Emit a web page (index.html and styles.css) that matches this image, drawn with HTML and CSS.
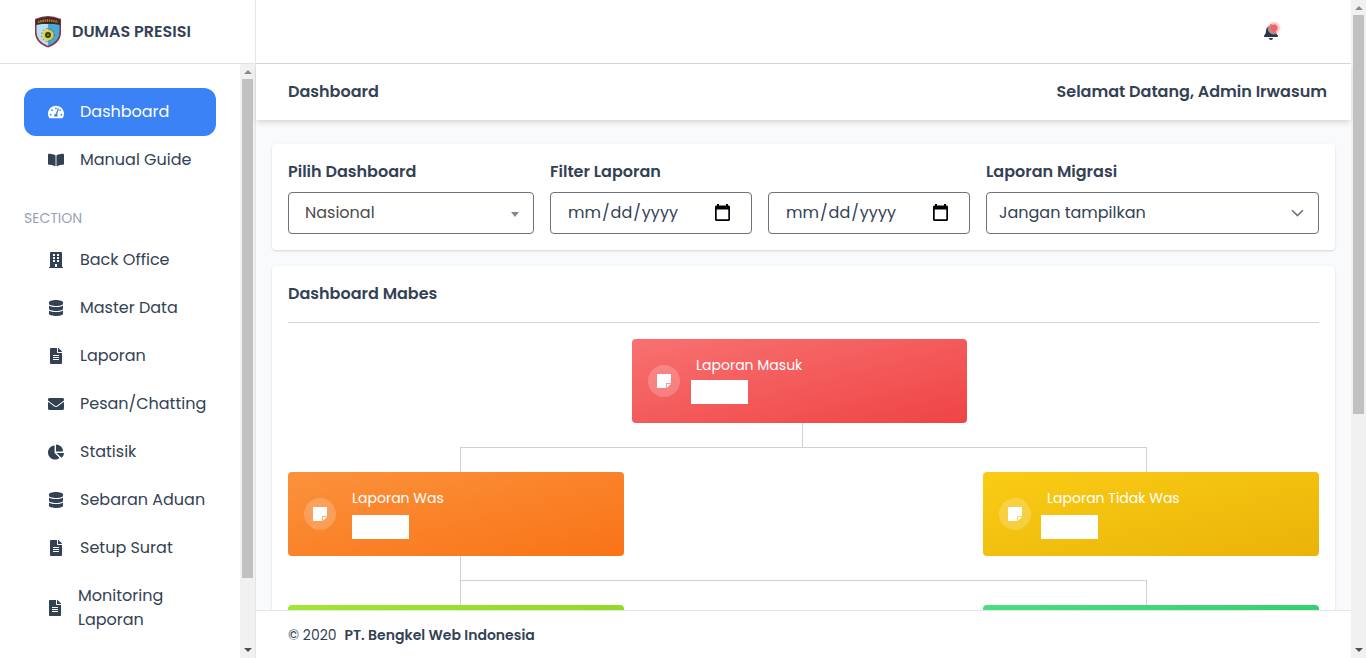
FILE: index.html
```html
<!DOCTYPE html>
<html lang="id">
<head>
<meta charset="utf-8">
<title>Dashboard - Dumas Presisi</title>
<link rel="stylesheet" href="styles.css">
</head>
<body>
<svg class="defs" aria-hidden="true">
  <symbol id="gauge" viewBox="0 0 576 512"><path d="M288 32C128.94 32 0 160.94 0 320c0 52.8 14.25 102.26 39.06 144.8 5.61 9.62 16.3 15.2 27.44 15.2h443c11.14 0 21.83-5.58 27.44-15.2C561.75 422.26 576 372.8 576 320c0-159.06-128.94-288-288-288zm0 64c14.71 0 26.58 10.13 30.32 23.65-1.11 2.26-2.64 4.23-3.45 6.67l-9.22 27.67c-5.13 3.49-10.97 6.01-17.64 6.01-17.67 0-32-14.33-32-32S270.33 96 288 96zM96 384c-17.67 0-32-14.33-32-32s14.33-32 32-32 32 14.33 32 32-14.33 32-32 32zm48-160c-17.67 0-32-14.33-32-32s14.33-32 32-32 32 14.33 32 32-14.33 32-32 32zm246.77-72.41l-61.33 184C343.13 347.33 352 364.54 352 384c0 11.72-3.38 22.55-8.88 32H232.88c-5.5-9.45-8.88-20.28-8.88-32 0-33.94 26.5-61.43 59.9-63.59l61.34-184.01c4.17-12.56 17.73-19.45 30.36-15.17 12.57 4.19 19.35 17.79 15.17 30.36zm14.66 57.2l15.52-46.55c3.47-1.29 7.13-2.23 11.05-2.23 17.67 0 32 14.33 32 32s-14.33 32-32 32c-11.38-.01-20.89-6.28-26.57-15.22zM480 384c-17.67 0-32-14.33-32-32s14.33-32 32-32 32 14.33 32 32-14.33 32-32 32z"/></symbol>
  <symbol id="book" viewBox="0 0 576 512"><path d="M542.22 32.05c-54.8 3.11-163.72 14.43-230.96 55.59-4.64 2.84-7.27 7.89-7.27 13.17v363.87c0 11.55 12.63 18.85 23.28 13.49 69.18-34.82 169.23-44.32 218.7-46.92 16.89-.89 30.02-14.43 30.02-30.66V62.75c.01-17.71-15.35-31.74-33.77-30.7zM264.73 87.64C197.5 46.48 88.58 35.17 33.78 32.05 15.36 31.01 0 45.04 0 62.75V400.6c0 16.24 13.13 29.78 30.02 30.66 49.49 2.6 149.59 12.11 218.77 46.95 10.62 5.35 23.21-1.94 23.21-13.46V100.63c0-5.29-2.62-10.14-7.27-12.99z"/></symbol>
  <symbol id="building" viewBox="0 0 448 512"><path fill-rule="evenodd" d="M436 480h-20V24c0-13.3-10.7-24-24-24H56C42.7 0 32 10.7 32 24v456H12c-6.6 0-12 5.4-12 12v20h448v-20c0-6.6-5.4-12-12-12zM128 76c0-6.6 5.4-12 12-12h40c6.6 0 12 5.4 12 12v40c0 6.6-5.4 12-12 12h-40c-6.6 0-12-5.4-12-12V76zm0 96c0-6.6 5.4-12 12-12h40c6.6 0 12 5.4 12 12v40c0 6.6-5.4 12-12 12h-40c-6.6 0-12-5.4-12-12v-40zm52 148h-40c-6.6 0-12-5.4-12-12v-40c0-6.6 5.4-12 12-12h40c6.6 0 12 5.4 12 12v40c0 6.6-5.4 12-12 12zm76 160h-64v-84c0-6.6 5.4-12 12-12h40c6.6 0 12 5.4 12 12v84zm64-172c0 6.6-5.4 12-12 12h-40c-6.6 0-12-5.4-12-12v-40c0-6.6 5.4-12 12-12h40c6.6 0 12 5.4 12 12v40zm0-96c0 6.6-5.4 12-12 12h-40c-6.6 0-12-5.4-12-12v-40c0-6.6 5.4-12 12-12h40c6.6 0 12 5.4 12 12v40zm0-96c0 6.6-5.4 12-12 12h-40c-6.6 0-12-5.4-12-12V76c0-6.6 5.4-12 12-12h40c6.6 0 12 5.4 12 12v40z"/></symbol>
  <symbol id="database" viewBox="0 0 448 512"><path d="M448 73.143v45.714C448 159.143 347.667 192 224 192S0 159.143 0 118.857V73.143C0 32.857 100.333 0 224 0s224 32.857 224 73.143zM448 176v102.857C448 319.143 347.667 352 224 352S0 319.143 0 278.857V176c48.125 33.143 136.208 48.572 224 48.572S399.874 209.143 448 176zm0 160v102.857C448 479.143 347.667 512 224 512S0 479.143 0 438.857V336c48.125 33.143 136.208 48.572 224 48.572S399.874 369.143 448 336z"/></symbol>
  <symbol id="file" viewBox="0 0 384 512"><path fill-rule="evenodd" d="M224 136V0H24C10.7 0 0 10.7 0 24v464c0 13.3 10.7 24 24 24h336c13.3 0 24-10.7 24-24V160H248c-13.2 0-24-10.8-24-24zm64 236c0 6.600-5.400 12-12 12H108c-6.600 0-12-5.400-12-12v-8c0-6.600 5.400-12 12-12h168c6.600 0 12 5.400 12 12v8zm0-64c0 6.600-5.400 12-12 12H108c-6.600 0-12-5.400-12-12v-8c0-6.600 5.400-12 12-12h168c6.600 0 12 5.400 12 12v8zm0-72v8c0 6.600-5.400 12-12 12H108c-6.600 0-12-5.400-12-12v-8c0-6.600 5.400-12 12-12h168c6.600 0 12 5.400 12 12zm96-114.100v6.100H256V0h6.100c6.400 0 12.500 2.500 17 7l97.900 98c4.500 4.500 7 10.600 7 16.900z"/></symbol>
  <symbol id="mail" viewBox="0 0 512 512"><path d="M502.300 190.800c3.900-3.100 9.700-.2 9.700 4.700V400c0 26.500-21.500 48-48 48H48c-26.500 0-48-21.500-48-48V195.600c0-5 5.700-7.800 9.700-4.700 22.400 17.400 52.100 39.500 154.100 113.600 21.100 15.400 56.700 47.800 92.200 47.600 35.700.3 72-32.800 92.300-47.600 102-74.100 131.600-96.300 154-113.700zM256 320c23.200.4 56.600-29.200 73.400-41.400 132.700-96.300 142.800-104.700 173.400-128.700 5.800-4.500 9.200-11.500 9.200-18.900v-19c0-26.500-21.500-48-48-48H48c-26.500 0-48 21.500-48 48v19c0 7.400 3.400 14.300 9.200 18.900 30.600 23.900 40.700 32.400 173.400 128.700 16.800 12.200 50.200 41.800 73.400 41.400z"/></symbol>
  <symbol id="pie" viewBox="0 0 544 512"><path d="M527.790 288H290.500l158.030 158.030c6.040 6.040 15.980 6.530 22.190.68 38.700-36.460 65.320-85.610 73.130-140.860 1.340-9.460-6.510-17.850-16.060-17.850zm-15.830-64.800C503.720 103.740 408.260 8.280 288.800.04 279.680-.59 272 7.100 272 16.240V240h223.770c9.140 0 16.820-7.680 16.190-16.800zM224 288V50.710c0-9.550-8.390-17.400-17.840-16.060C86.990 51.490-4.100 155.600.14 280.370 4.500 408.510 114.830 513.590 243.030 511.980c50.400-.63 96.970-16.870 135.260-44.030 7.900-5.600 8.420-17.230 1.570-24.080L224 288z"/></symbol>
  <symbol id="bell" viewBox="0 0 448 512"><path d="M224 512c35.320 0 63.970-28.650 63.970-64H160.030c0 35.350 28.650 64 63.970 64zm215.390-149.710c-19.320-20.760-55.470-51.990-55.470-154.290 0-77.700-54.480-139.900-127.940-155.160V32c0-17.670-14.320-32-31.980-32s-31.980 14.330-31.980 32v20.840C118.560 68.100 64.080 130.300 64.080 208c0 102.300-36.150 133.530-55.470 154.290-6 6.450-8.660 14.160-8.610 21.710.11 16.400 12.980 32 32.100 32h383.800c19.120 0 32-15.600 32.100-32 .05-7.550-2.610-15.270-8.610-21.710z"/></symbol>
  <symbol id="note" viewBox="0 0 14 14"><path d="M0 0h14v9H9v5H0z"/><path d="M9.800 9.800H14L9.800 14z"/></symbol>
  <symbol id="calendar" viewBox="0 0 15 17"><path fill-rule="evenodd" d="M2 0h2v1.500h7V0h2v1.500h1l1 1V16l-1 1H1l-1-1V2.500l1-1h1zM1.700 5.500v9.800h11.600V5.500z"/></symbol>
</svg>

<div class="app">
  <aside class="side">
    <div class="brand">
      <svg class="crest" viewBox="0 0 28 32">
        <path d="M1 3Q8 0 14 0t13 3v13q0 11-13 15.500Q1 27 1 16z" fill="#8c2f45"/>
        <path d="M2.500 8h11.500v22Q2.500 25.500 2.500 16z" fill="#b9e0f2"/>
        <path d="M14 8h11.500v8q0 9.500-11.500 14z" fill="#48a9d8"/>
        <path d="M2 3.800Q8 1.200 14 1.200t12 2.600V9Q14 6.500 2 9z" fill="#3b2a20"/>
        <path d="M4 6Q14 3 24 6" fill="none" stroke="#b5853a" stroke-width="2.400" stroke-dasharray="1.400 .8"/>
        <circle cx="14" cy="19" r="6.500" fill="none" stroke="#786b20" stroke-width="1" stroke-dasharray="1.500 2"/>
        <circle cx="14" cy="19" r="5.300" fill="#e7d126"/>
        <circle cx="14" cy="19" r="3" fill="#343d1c"/>
        <circle cx="14" cy="19" r="1" fill="#8d8b2b"/>
      </svg>
      <span class="brand-name">DUMAS PRESISI</span>
    </div>
    <div class="side-body">
      <nav class="nav">
        <a class="item active"><svg class="ico"><use href="#gauge"/></svg><span>Dashboard</span></a>
        <a class="item"><svg class="ico"><use href="#book"/></svg><span>Manual Guide</span></a>
        <div class="section">SECTION</div>
        <a class="item"><svg class="ico"><use href="#building"/></svg><span>Back Office</span></a>
        <a class="item"><svg class="ico"><use href="#database"/></svg><span>Master Data</span></a>
        <a class="item"><svg class="ico"><use href="#file"/></svg><span>Laporan</span></a>
        <a class="item"><svg class="ico"><use href="#mail"/></svg><span>Pesan/Chatting</span></a>
        <a class="item"><svg class="ico"><use href="#pie"/></svg><span>Statisik</span></a>
        <a class="item"><svg class="ico"><use href="#database"/></svg><span>Sebaran Aduan</span></a>
        <a class="item"><svg class="ico"><use href="#file"/></svg><span>Setup Surat</span></a>
        <a class="item tall"><svg class="ico"><use href="#file"/></svg><span>Monitoring<br>Laporan</span></a>
      </nav>
      <div class="scroll"><i class="up"></i><i class="thumb side-thumb"></i><i class="down"></i></div>
    </div>
  </aside>

  <div class="main">
    <header class="top">
      <div class="bell"><svg class="bell-ico"><use href="#bell"/></svg><i class="ping"></i></div>
    </header>
    <div class="titlebar"><span>Dashboard</span><span>Selamat Datang, Admin Irwasum</span></div>
    <div class="content">
      <section class="card filters">
        <div class="field"><label>Pilih Dashboard</label>
          <div class="box nasional"><span>Nasional</span><i class="caret"></i></div></div>
        <div class="field"><label>Filter Laporan</label>
          <div class="dates">
            <div class="box date"><span class="mask"><b>mm</b>/<b>dd</b>/<b>yyyy</b></span><svg class="cal"><use href="#calendar"/></svg></div>
            <div class="box date"><span class="mask"><b>mm</b>/<b>dd</b>/<b>yyyy</b></span><svg class="cal"><use href="#calendar"/></svg></div>
          </div></div>
        <div class="field"><label>Laporan Migrasi</label>
          <div class="box"><span>Jangan tampilkan</span><svg class="chev" viewBox="0 0 12 8"><path d="M1 1l5 5 5-5"/></svg></div></div>
      </section>

      <section class="card board">
        <h2>Dashboard Mabes</h2>
        <div class="row first">
          <div class="stat red"><span class="disc"><svg class="note"><use href="#note"/></svg></span><div class="info"><span>Laporan Masuk</span><i class="blank"></i></div></div>
        </div>
        <div class="stem"></div>
        <div class="fork"></div>
        <div class="row">
          <div class="stat orange"><span class="disc"><svg class="note"><use href="#note"/></svg></span><div class="info"><span>Laporan Was</span><i class="blank"></i></div></div>
          <div class="stat yellow"><span class="disc"><svg class="note"><use href="#note"/></svg></span><div class="info"><span>Laporan Tidak Was</span><i class="blank"></i></div></div>
        </div>
        <div class="stem left"></div>
        <div class="fork"></div>
        <div class="row">
          <div class="stat lime"></div>
          <div class="stat green"></div>
        </div>
      </section>
    </div>
    <footer class="foot"><span>© 2020</span><span class="company">PT. Bengkel Web Indonesia</span></footer>
  </div>
  <div class="scroll page"><i class="up"></i><i class="thumb page-thumb"></i><i class="down"></i></div>
</div>
</body>
</html>
```

FILE: styles.css
```css
* { box-sizing: border-box; }
body { margin: 0; font: 16px/24px Poppins, Inter, sans-serif; font-feature-settings: "cv11"; color: #334155; overflow: hidden; }
.defs { display: none; }
svg { fill: currentColor; flex: none; }
i { display: block; }
.app { display: flex; height: 658px; }

.side { width: 256px; flex: none; display: flex; flex-direction: column; border-right: 1px solid #e2e5e9; }
.brand { height: 64px; flex: none; display: flex; align-items: center; border-bottom: 1px solid #e0e2e5; padding-left: 34px; gap: 10px; }
.crest { width: 28px; height: 32px; }
.brand-name { font-weight: 600; }
.side-body { flex: 1; display: flex; min-height: 0; }
.nav { width: 240px; flex: none; padding: 24px; }
.item { display: flex; align-items: center; gap: 16px; height: 48px; padding-left: 24px; white-space: nowrap; }
.item.active { background: #3b82f6; color: #fff; border-radius: 12px; }
.item.tall { height: 72px; gap: 15px; padding-left: 23px; }
.ico { width: 16px; height: 16px; }
.section { margin: 24px 0 8px; height: 20px; font-size: 14px; line-height: 20px; color: #94a3b8; }

.scroll { width: 15px; flex: none; background: #f1f1f1; display: flex; flex-direction: column; align-items: center; }
.up, .down { border: 4px solid transparent; width: 0; height: 0; }
.up { border-top: 0; border-bottom-color: #8b8b8b; margin: 6px 0 5px; }
.down { border-bottom: 0; border-top-color: #505050; margin: auto 0 6px; }
.thumb { width: 11px; background: #c1c1c1; flex: none; }
.side-thumb { height: 499px; }
.page-thumb { height: 399px; }

.main { width: 1095px; flex: none; display: flex; flex-direction: column; }
.top { height: 64px; flex: none; border-bottom: 1px solid #d4d4d4; display: flex; align-items: center; justify-content: flex-end; padding-right: 72px; }
.bell { position: relative; width: 16px; height: 16px; }
.bell-ico { display: block; width: 16px; height: 16px; color: #2b3548; }
.ping { position: absolute; left: 4px; top: -3px; width: 14px; height: 14px; border-radius: 50%; background: radial-gradient(circle, #f0616a 3px, rgba(252,165,165,.75) 4px, rgba(254,202,202,.55) 6px, transparent 7px); }
.titlebar { height: 56px; flex: none; display: flex; align-items: center; justify-content: space-between; padding: 0 24px 0 32px; background: #fff; box-shadow: 0 4px 6px -1px rgba(0,0,0,.1), 0 2px 4px -1px rgba(0,0,0,.06); position: relative; font-weight: 600; }
.content { flex: 1; min-height: 0; overflow: hidden; background: #f8fafc; padding: 24px 16px 0; }
.card { background: #fff; border-radius: 4px; box-shadow: 0 1px 3px rgba(0,0,0,.1), 0 1px 2px rgba(0,0,0,.06); padding: 16px; margin-bottom: 16px; }
.filters { display: grid; grid-template-columns: 246px 420px 333px; gap: 16px; height: 106px; }
.field label { display: block; font-weight: 600; height: 24px; margin-bottom: 8px; }
.dates { display: grid; grid-template-columns: 1fr 1fr; gap: 16px; }
.box { height: 42px; border: 1px solid #6b7280; border-radius: 4px; display: flex; align-items: center; justify-content: space-between; padding: 0 14px 0 12px; }
.nasional { padding: 0 14px 0 16px; color: #4b4b4b; }
.caret { border: 4px solid transparent; border-top: 5px solid #888; border-bottom: 0; margin-top: 3px; }
.date { padding: 0 21px 0 16px; }
.mask b { font-weight: 400; padding: 0 1px; }
.cal { width: 15px; height: 17px; color: #000; margin-bottom: 2px; }
.chev { width: 13px; height: 9px; fill: none; stroke: #6b7280; stroke-width: 1.5; }

.board { height: 600px; }
.board h2 { margin: 0; height: 41px; font-size: 16px; line-height: 24px; font-weight: 600; border-bottom: 1px solid #d4d4d4; }
.row { display: flex; justify-content: space-between; }
.row.first { justify-content: flex-start; padding-left: 344px; margin-top: 16px; }
.stat { width: 336px; height: 84px; border-radius: 4px; padding: 16px; display: flex; align-items: center; color: #fff; }
.first .stat { width: 335px; }
.red { background: linear-gradient(to bottom right, #f87171, #ef4444); }
.orange { background: linear-gradient(to bottom right, #fb923c, #f97316); }
.yellow { background: linear-gradient(to bottom right, #facc15, #eab308); }
.lime { background: linear-gradient(to bottom right, #a3e635, #84cc16); }
.green { background: linear-gradient(to bottom right, #4ade80, #22c55e); }
.disc { width: 32px; height: 32px; border-radius: 50%; background: rgba(255,255,255,.2); display: flex; align-items: center; justify-content: center; flex: none; }
.note { width: 14px; height: 14px; }
.info { height: 52px; padding-left: 16px; font-size: 14px; line-height: 20px; }
.info span { display: block; }
.blank { width: 57px; height: 24px; background: #fff; margin-top: 7px; }
.red .info { padding-left: 11px; }
.red .info span { padding-left: 5px; }
.red .blank { margin-top: 5px; }
.yellow .info { padding-left: 10px; }
.yellow .info span { padding-left: 6px; }
.stem { width: 1px; height: 24px; background: #d1d1d4; margin-left: 514px; }
.stem.left { margin-left: 172px; }
.fork { height: 25px; width: 687px; margin-left: 172px; border: 1px solid #d1d1d4; border-bottom: 0; }

.foot { height: 48px; flex: none; border-top: 1px solid #e2e5e9; display: flex; align-items: center; gap: 8px; padding-left: 32px; font-size: 14px; background: #fff; }
.company { font-weight: 600; }
```
